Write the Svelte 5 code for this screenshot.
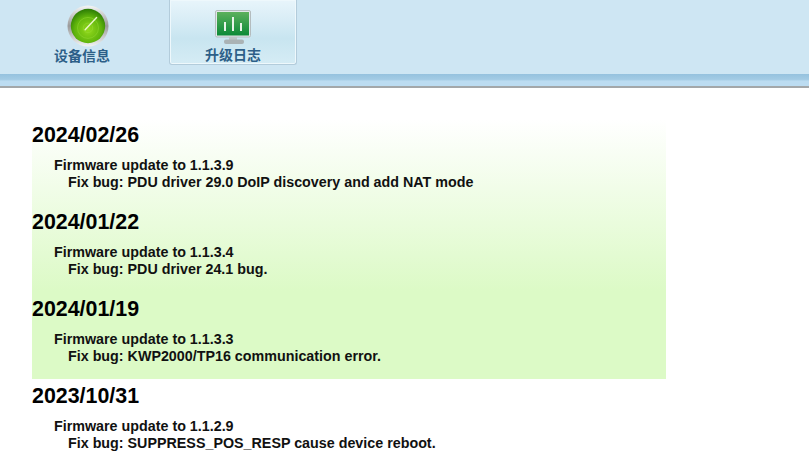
<script>
	const tabs = [
		{ label: '设备信息', icon: 'radar', active: false },
		{ label: '升级日志', icon: 'monitor', active: true }
	];

	const log = [
		{ date: '2024/02/26', title: 'Firmware update to 1.1.3.9', detail: 'Fix bug: PDU driver 29.0 DoIP discovery and add NAT mode' },
		{ date: '2024/01/22', title: 'Firmware update to 1.1.3.4', detail: 'Fix bug: PDU driver 24.1 bug.' },
		{ date: '2024/01/19', title: 'Firmware update to 1.1.3.3', detail: 'Fix bug: KWP2000/TP16 communication error.' },
		{ date: '2023/10/31', title: 'Firmware update to 1.1.2.9', detail: 'Fix bug: SUPPRESS_POS_RESP cause device reboot.' }
	];
</script>

<div class="toolbar">
	<div class="tabs">
		{#each tabs as tab}
			<div class="tab" class:active={tab.active}>
				{#if tab.icon === 'radar'}
					<svg width="42" height="42" viewBox="0 0 44 44">
						<defs>
							<linearGradient id="rim" x1="0" y1="0" x2="0" y2="1">
								<stop offset="0" stop-color="#f4f6f6" />
								<stop offset="0.5" stop-color="#9a9a9a" />
								<stop offset="1" stop-color="#f2f4f4" />
							</linearGradient>
							<radialGradient id="dish" cx="0.5" cy="0.62" r="0.6">
								<stop offset="0" stop-color="#93d91c" />
								<stop offset="0.65" stop-color="#5fb40c" />
								<stop offset="1" stop-color="#2f7f06" />
							</radialGradient>
						</defs>
						<circle cx="22" cy="22" r="21.5" fill="url(#rim)" />
						<circle cx="22" cy="22" r="18" fill="url(#dish)" />
						<circle cx="22" cy="24" r="11" fill="none" stroke="#9ade3a" stroke-opacity="0.45" />
						<circle cx="22" cy="24" r="5" fill="none" stroke="#9ade3a" stroke-opacity="0.45" />
						<path d="M19 26 L31 13" stroke="#eaf7c8" stroke-width="1.5" stroke-linecap="round" />
					</svg>
				{:else}
					<svg width="36" height="34" viewBox="0 0 36 34">
						<defs>
							<linearGradient id="screen" x1="0" y1="0" x2="0" y2="1">
								<stop offset="0" stop-color="#5cb05c" />
								<stop offset="1" stop-color="#0c8a38" />
							</linearGradient>
						</defs>
						<rect x="0.5" y="0.5" width="35" height="26.5" rx="1.5" fill="#e2e8e9" stroke="#b4bcbe" />
						<rect x="2" y="2" width="32" height="23.5" fill="url(#screen)" />
						<path d="M10 12v9M18 7v14M26 13v8" stroke="#e8f4e8" stroke-width="2" />
						<rect x="14" y="27" width="8" height="3" fill="#bcc5c7" />
						<rect x="9" y="29.5" width="20" height="4.5" rx="2" fill="#aab3b5" />
					</svg>
				{/if}
				<span>{tab.label}</span>
			</div>
		{/each}
	</div>
	<div class="band"></div>
</div>

<div class="content">
	{#each log as entry}
		<section class="entry">
			<h2>{entry.date}</h2>
			<p class="title">{entry.title}</p>
			<p class="detail">{entry.detail}</p>
		</section>
	{/each}
</div>

<style>
	:global(body) {
		background: #fff;
		font-family: "Liberation Sans", Arial, sans-serif;
	}

	.toolbar {
		background: #cee6f3;
		border-bottom: 2px solid #a3a7a9;
	}

	.tabs {
		display: flex;
		height: 74px;
		padding-left: 22px;
		gap: 27px;
	}

	.tab {
		width: 120px;
		height: 65px;
		box-sizing: border-box;
		display: flex;
		flex-direction: column;
		align-items: center;
		justify-content: flex-end;
		padding-bottom: 1px;
		color: #2d5f88;
		font: bold 14px "Noto Sans CJK SC", sans-serif;
	}

	.tab svg {
		display: block;
		flex: none;
		margin-left: 12px;
	}

	.tab span {
		line-height: 17px;
	}

	.tab.active {
		width: 128px;
		background: linear-gradient(#e8f5fb 0%, #d9edf6 30%, #c8e5f0 60%, #d5ecf5 100%);
		border: 1px solid #b3ccdb;
		border-top: 0;
		border-radius: 0 0 3px 3px;
		box-shadow: inset 0 0 0 1px #eef8fc;
	}

	.tab.active svg {
		margin: 0 0 2px;
	}

	.band {
		height: 12px;
		background: linear-gradient(#95c2de 0%, #a3cbe4 45%, #bcdcf1 60%, #bcdcf1 100%);
	}

	.content {
		padding: 32px 0 0 32px;
		background: linear-gradient(#fff 0%, #dcfac6 66%, #dcfac6 100%) 32px 32px / 634px 259px no-repeat;
	}

	.entry {
		height: 87px;
	}

	h2 {
		margin: 0;
		height: 37px;
		font-size: 21.4px;
		line-height: 30px;
		font-weight: bold;
		color: #000;
	}

	p {
		margin: 0;
		font-size: 14.3px;
		line-height: 17px;
		font-weight: bold;
		color: #111;
	}

	.title {
		padding-left: 22px;
	}

	.detail {
		padding-left: 36px;
	}
</style>
